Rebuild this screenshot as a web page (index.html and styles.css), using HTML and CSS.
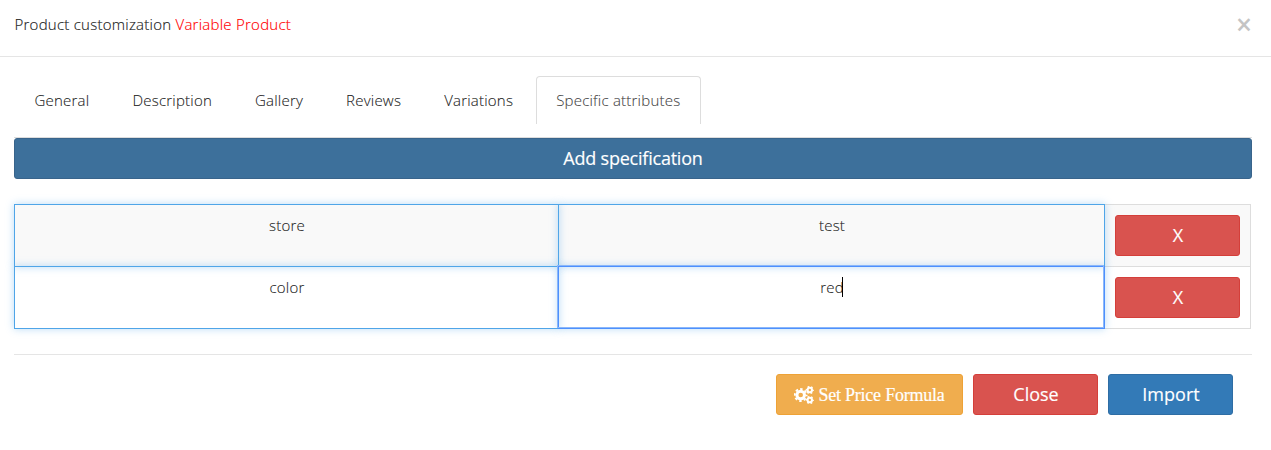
FILE: index.html
```html
<!DOCTYPE html>
<html lang="en">
<head>
<meta charset="utf-8">
<title>Product customization</title>
<link rel="stylesheet" href="styles.css">
</head>
<body>
<div class="modal">
  <header class="modal-header">
    <h4 class="title">Product customization <span class="type">Variable Product</span></h4>
    <button class="dismiss" aria-label="Close">×</button>
  </header>
  <main class="modal-body">
    <nav class="tabs">
      <a class="tab">General</a>
      <a class="tab">Description</a>
      <a class="tab">Gallery</a>
      <a class="tab">Reviews</a>
      <a class="tab">Variations</a>
      <a class="tab active">Specific attributes</a>
    </nav>
    <button class="btn add">Add specification</button>
    <div class="specs">
      <div class="row striped">
        <div class="cell edit">store</div>
        <div class="cell edit">test</div>
        <div class="cell action"><button class="btn danger">X</button></div>
      </div>
      <div class="row">
        <div class="cell edit">color</div>
        <div class="cell edit focused">red<span class="caret"></span></div>
        <div class="cell action"><button class="btn danger">X</button></div>
      </div>
    </div>
  </main>
  <footer class="modal-footer">
    <button class="btn warning"><svg class="cogs" viewBox="0 0 20 18" fill="none" stroke="#fff">
      <circle cx="6.7" cy="9" r="3.8" stroke-width="3"/>
      <circle cx="6.7" cy="9" r="5.9" stroke-width="2" stroke-dasharray="2.5 2.134" stroke-dashoffset="1.25"/>
      <circle cx="15.8" cy="4" r="2.2" stroke-width="2"/>
      <circle cx="15.8" cy="4" r="3.4" stroke-width="1.4" stroke-dasharray="1.7 1.86" stroke-dashoffset=".85"/>
      <circle cx="15.8" cy="14" r="2.2" stroke-width="2"/>
      <circle cx="15.8" cy="14" r="3.4" stroke-width="1.4" stroke-dasharray="1.7 1.86" stroke-dashoffset=".85"/>
    </svg>Set Price Formula</button>
    <button class="btn danger">Close</button>
    <button class="btn primary">Import</button>
  </footer>
</div>
</body>
</html>
```
FILE: styles.css
```css
* { box-sizing: border-box; }
body {
  margin: 0;
  background: #fff;
  color: #222;
  font: 300 15px/20px "Open Sans", sans-serif;
  overflow: hidden;
}
.modal-header {
  display: flex;
  justify-content: space-between;
  height: 57px;
  padding: 14px 19px 0 14.5px;
  border-bottom: 1px solid #e5e5e5;
}
.title {
  margin: 0;
  font: inherit;
  letter-spacing: .25px;
  -webkit-text-stroke: .15px;
}
.type { color: #f00; }
.dismiss {
  width: 16px;
  height: 20px;
  padding: 0;
  border: 0;
  background: none;
  color: #c4c4c4;
  font: 600 28px/20px "Open Sans", sans-serif;
}
.modal-body { padding: 19px 19px 0 14px; }
.tabs {
  display: flex;
  gap: 2px;
  height: 62px;
  border-bottom: 1px solid #ddd;
}
.tab {
  height: 48px;
  padding: 13px 19.5px 0;
  border: 1px solid transparent;
  border-bottom: 0;
  border-radius: 4px 4px 0 0;
  letter-spacing: .22px;
  white-space: nowrap;
  -webkit-text-stroke: .1px;
}
.tab.active { border-color: #ddd; color: #444; }
.btn {
  width: 125px;
  height: 41px;
  padding: 0 0 2px;
  border: 1px solid;
  border-radius: 3px;
  color: #fff;
  font: 400 18px/24px "Open Sans", sans-serif;
  -webkit-text-stroke: .15px #fff;
}
.btn.add {
  display: block;
  width: 100%;
  background: #3d709b;
  border-color: #39648b;
  letter-spacing: -.22px;
}
.btn.danger { padding-left: 1px; background: #d9534f; border-color: #d43f3a; }
.btn.primary { padding-left: 1px; background: #337ab7; border-color: #2e6da4; }
.btn.warning {
  display: flex;
  align-items: center;
  justify-content: center;
  gap: 4px;
  width: 187px;
  padding: 0;
  background: #f0ad4e;
  border-color: #eea236;
  font: 400 18px/20px "Liberation Serif", serif;
  letter-spacing: -.22px;
  -webkit-text-stroke: .2px #fff;
}
.cogs { width: 20px; height: 18px; }
.specs { width: 1237px; margin-top: 25px; }
.row {
  display: grid;
  grid-template-columns: 544px 546px 147px;
  height: 63px;
}
.row + .row { margin-top: -1px; }
.striped { background: #f9f9f9; }
.cell { position: relative; text-align: center; border: 1px solid #ddd; }
.edit {
  z-index: 1;
  margin-right: -1px;
  padding: 10px 0 0 1px;
  border-color: #4fa5e8;
  box-shadow: 0 0 8px rgba(82, 168, 236, .4);
  letter-spacing: .2px;
  -webkit-text-stroke: .1px;
}
.focused {
  z-index: 2;
  border-color: #4d90fe;
}
.focused::before {
  content: "";
  position: absolute;
  inset: -2px 0 0 -2px;
  border: 1px solid #8bb7f9;
}
.caret {
  display: inline-block;
  width: 1px;
  height: 20px;
  margin: 0 1px 0 -2px;
  background: #000;
  vertical-align: top;
}
.action { padding: 10px; }
.modal-footer {
  display: flex;
  justify-content: flex-end;
  gap: 10px;
  margin: 25px 19px 0 14px;
  padding: 19px 19px 0 0;
  border-top: 1px solid #e5e5e5;
}
```
